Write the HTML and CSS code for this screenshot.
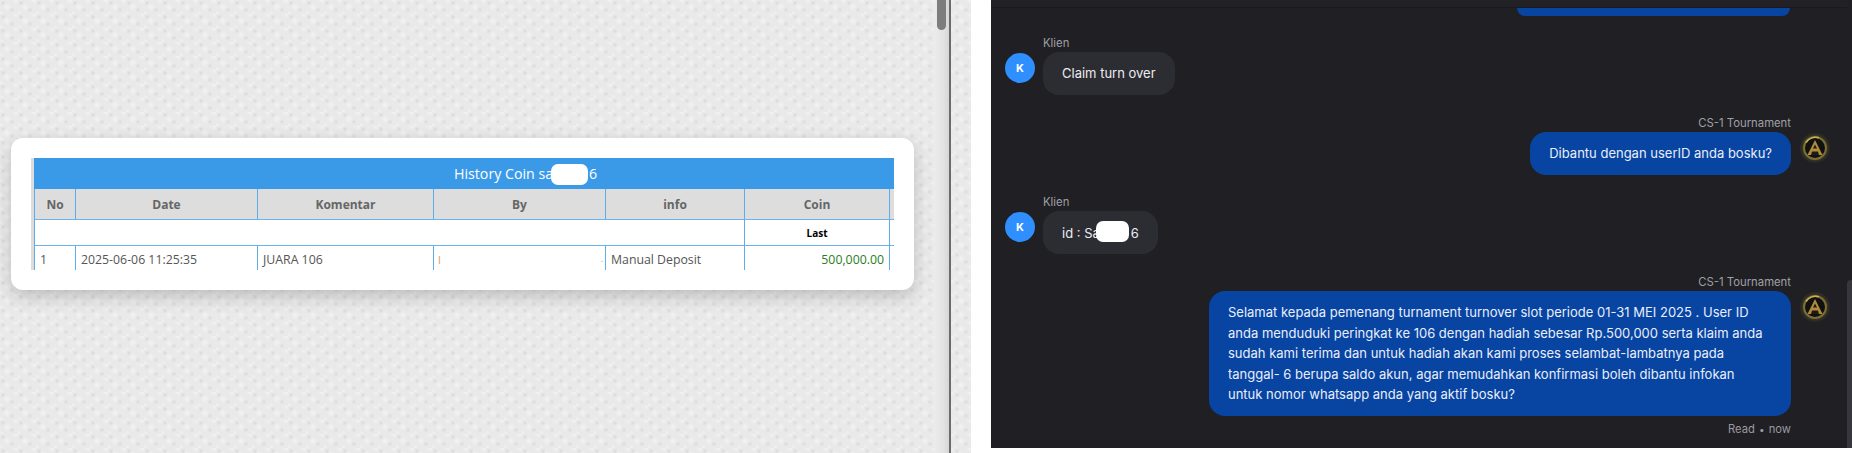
FILE: index.html
```html
<!DOCTYPE html>
<html lang="id">
<head>
<meta charset="utf-8">
<title>History Coin</title>
<link rel="stylesheet" href="styles.css">
</head>
<body>
<div class="page">
  <section class="left">
    <div class="viewport">
      <div class="card">
        <div class="table-clip">
          <table class="history">
            <colgroup>
              <col class="c-no"><col class="c-date"><col class="c-kom"><col class="c-by"><col class="c-info"><col class="c-coin"><col class="c-end">
            </colgroup>
            <tr class="title-row"><th colspan="7"><span class="title-text">History Coin sa<span class="title-gap"></span>6</span><span class="mask mask-title"></span></th></tr>
            <tr class="head-row"><th>No</th><th>Date</th><th>Komentar</th><th>By</th><th>info</th><th>Coin</th><th></th></tr>
            <tr class="sub-row"><td colspan="5"></td><td class="last">Last</td><td class="blank"></td></tr>
            <tr class="data-row">
              <td>1</td><td>2025-06-06 11:25:35</td><td>JUARA 106</td>
              <td><div class="by"><span class="by-name">l</span><span class="by-dot">.</span></div></td>
              <td>Manual Deposit</td><td class="amount">500,000.00</td><td class="blank"></td>
            </tr>
          </table>
        </div>
      </div>
    </div>
    <div class="scrollbar"><div class="scrollbar-thumb"></div></div>
    <div class="divider"></div>
  </section>

  <section class="chat">
    <div class="chat-main">
      <div class="chat-top"></div>
      <div class="stream">
        <div class="cut-bubble"></div>

        <div class="msg client first">
          <div class="avatar">K</div>
          <div class="body">
            <div class="name">Klien</div>
            <div class="bubble">Claim turn over</div>
          </div>
        </div>

        <div class="msg agent">
          <div class="body">
            <div class="name">CS-1 Tournament</div>
            <div class="bubble">Dibantu dengan userID anda bosku?</div>
          </div>
          <svg class="logo" viewBox="0 0 30 30" aria-hidden="true">
            <circle cx="15" cy="15" r="15" fill="#2c2b26"/>
            <circle cx="15" cy="15" r="13" fill="#37352a"/>
            <circle cx="15" cy="15" r="11" fill="#101113" stroke="#7d6f30" stroke-width="2"/>
            <path d="M6 9.5A11 11 0 0 1 19 4.8" fill="none" stroke="#c9b04e" stroke-width="1.5"/>
            <path d="M15 7 22.5 22H7.5Z" fill="#b08c3a"/>
            <path d="M15 11.5 17 15.5H13Z" fill="#1e1b16"/>
            <path d="M12 18.5H18L19 22H11Z" fill="#1e1b16"/>
          </svg>
        </div>

        <div class="msg client">
          <div class="avatar">K</div>
          <div class="body">
            <div class="name">Klien</div>
            <div class="bubble bubble-id">id : Sa<span class="id-gap"></span>6<span class="mask mask-id"></span></div>
          </div>
        </div>

        <div class="msg agent">
          <div class="body">
            <div class="name">CS-1 Tournament</div>
            <div class="bubble bubble-long">Selamat kepada pemenang turnament turnover slot periode 01-31 MEI 2025 . User ID anda menduduki peringkat ke 106 dengan hadiah sebesar Rp.500,000 serta klaim anda sudah kami terima dan untuk hadiah akan kami proses selambat-lambatnya pada tanggal- 6 berupa saldo akun, agar memudahkan konfirmasi boleh dibantu infokan untuk nomor whatsapp anda yang aktif bosku?</div>
            <div class="meta">Read <span class="dot">•</span> now</div>
          </div>
          <svg class="logo" viewBox="0 0 30 30" aria-hidden="true">
            <circle cx="15" cy="15" r="15" fill="#2c2b26"/>
            <circle cx="15" cy="15" r="13" fill="#37352a"/>
            <circle cx="15" cy="15" r="11" fill="#101113" stroke="#7d6f30" stroke-width="2"/>
            <path d="M6 9.5A11 11 0 0 1 19 4.8" fill="none" stroke="#c9b04e" stroke-width="1.5"/>
            <path d="M15 7 22.5 22H7.5Z" fill="#b08c3a"/>
            <path d="M15 11.5 17 15.5H13Z" fill="#1e1b16"/>
            <path d="M12 18.5H18L19 22H11Z" fill="#1e1b16"/>
          </svg>
        </div>
      </div>
    </div>
    <div class="chat-scroll"><div class="chat-thumb"></div></div>
  </section>
</div>
</body>
</html>
```

FILE: styles.css
```css
* { box-sizing: border-box; }

html, body {
  margin: 0;
  height: 453px;
  overflow: hidden;
  background: #fff;
}

.page {
  display: flex;
  height: 453px;
}

/* left window */
.left {
  flex: 0 0 971px;
  display: flex;
  height: 453px;
  background-color: #e9e9e9;
  background-image:
    radial-gradient(circle at 3px 3px, #d9d9d9 0, rgba(217, 217, 217, 0.6) 1px, rgba(217, 217, 217, 0) 2.5px),
    radial-gradient(circle at 12px 10px, #d9d9d9 0, rgba(217, 217, 217, 0.6) 1px, rgba(217, 217, 217, 0) 2.5px),
    radial-gradient(circle at 7px 7px, #f3f3f3 0, rgba(243, 243, 243, 0) 4px),
    radial-gradient(circle at 16px 0, #f3f3f3 0, rgba(243, 243, 243, 0) 4px),
    radial-gradient(circle at 0 14px, #f3f3f3 0, rgba(243, 243, 243, 0) 4px);
  background-size: 18px 14px;
}

.viewport {
  flex: 0 0 934px;
  padding: 138px 20px 0 11px;
}

.card {
  height: 152px;
  padding: 20px;
  background: #fff;
  border-radius: 12px;
  box-shadow: 0 6px 18px rgba(0, 0, 0, 0.2);
}

.table-clip {
  height: 112px;
  overflow: hidden;
  border-left: 3px solid #dcdcdc;
}

.history {
  width: 860px;
  table-layout: fixed;
  border-collapse: separate;
  border-spacing: 0;
  font-family: "Open Sans", "Noto Sans", sans-serif;
  font-size: 12.3px;
  color: #555;
}

.c-no { width: 41px; }
.c-date { width: 182px; }
.c-kom { width: 176px; }
.c-by { width: 172px; }
.c-info { width: 139px; }
.c-coin { width: 145px; }
.c-end { width: 5px; }

.history th,
.history td {
  padding: 0;
  border-left: 1px solid #5dade9;
}

.title-row th {
  position: relative;
  height: 31px;
  padding-left: 420px;
  background: #3b9ae8;
  border-left: 0;
  color: #fff;
  font-size: 14.2px;
  font-weight: 400;
  text-align: left;
}

.title-gap {
  display: inline-block;
  width: 36px;
}

.mask {
  position: absolute;
  background: #fff;
  border-radius: 7px;
}

.mask-title {
  left: 517px;
  top: 6px;
  width: 37px;
  height: 21px;
}

.head-row th {
  height: 31px;
  background: #dddddd;
  border-bottom: 1px solid #6db3ea;
  color: #666;
  font-size: 12px;
  font-weight: 700;
  text-align: center;
}

.sub-row td {
  height: 26px;
  border-bottom: 1px solid #6db3ea;
}

.sub-row .last {
  color: #000;
  font-size: 10px;
  font-weight: 700;
  text-align: center;
}

.data-row td {
  height: 26px;
  padding: 0 5px;
  white-space: nowrap;
}

.data-row .blank { padding: 0; }

.data-row .amount {
  color: #2a7d1c;
  text-align: right;
}

.by {
  display: flex;
  justify-content: space-between;
  margin-left: -1px;
  margin-right: -3px;
}

.by-name { color: #c8834a; font-size: 11px; opacity: 0.8; }
.by-dot { color: #999; font-size: 9px; }

.scrollbar {
  flex: 0 0 15px;
  padding: 0 3px;
  background: linear-gradient(to right, #ececec, #e3e3e3 60%, #d6d6d6);
}

.scrollbar-thumb {
  height: 30px;
  background: #7d7d7d;
  border-radius: 0 0 5px 5px;
}

.divider {
  flex: 0 0 2px;
  background: #6b6b6b;
}

/* chat */
.chat {
  flex: 0 0 861px;
  margin-left: 20px;
  height: 448px;
  display: flex;
  background: #1f1f24;
  font-family: Inter, "Noto Sans", sans-serif;
  overflow: hidden;
}

.chat-main {
  flex: 1 1 auto;
  min-width: 0;
}

.chat-top {
  height: 8px;
  background: #212126;
  border-bottom: 1px solid #1a1a1e;
}

.stream {
  padding: 0 17px 0 14px;
}

.cut-bubble {
  width: 273px;
  height: 8px;
  margin-left: 512px;
  background: #0844a2;
  border-radius: 0 0 10px 10px;
}

.msg {
  display: flex;
  gap: 8px;
  margin-bottom: 20.8px;
}

.msg.first { margin-top: 20px; }

.msg.agent {
  justify-content: flex-end;
  gap: 9px;
}

.avatar {
  flex: 0 0 30px;
  height: 30px;
  margin-top: 17px;
  border-radius: 50%;
  background: #2f8fff;
  color: #fff;
  font-size: 11px;
  font-weight: 700;
  line-height: 30px;
  text-align: center;
}

.logo {
  flex: 0 0 30px;
  width: 30px;
  height: 30px;
  margin-top: 17px;
}

.name {
  height: 16px;
  color: #a19fa6;
  font-size: 11.3px;
  line-height: 14px;
}

.agent .body {
  display: flex;
  flex-direction: column;
  align-items: flex-end;
}

.bubble {
  padding: 11.2px 19px;
  border-radius: 16px;
  background: #2c2c33;
  color: #ececf0;
  font-size: 13px;
  line-height: 20.5px;
}

.agent .bubble {
  background: #0844a2;
  color: #e9effa;
}

.bubble-long {
  max-width: 582px;
}

.bubble-id {
  position: relative;
}

.id-gap {
  display: inline-block;
  width: 31px;
}

.mask-id {
  left: 53px;
  top: 10px;
  width: 33px;
  height: 21px;
}

.meta {
  margin-top: 6px;
  color: #9a9aa0;
  font-size: 11.2px;
  line-height: 14px;
}

.dot {
  font-size: 10px;
  margin: 0 1px;
}

.chat-scroll {
  flex: 0 0 5px;
  padding-top: 280px;
}

.chat-thumb {
  height: 168px;
  background: #36363c;
  border-radius: 4px 0 0 0;
}
```
